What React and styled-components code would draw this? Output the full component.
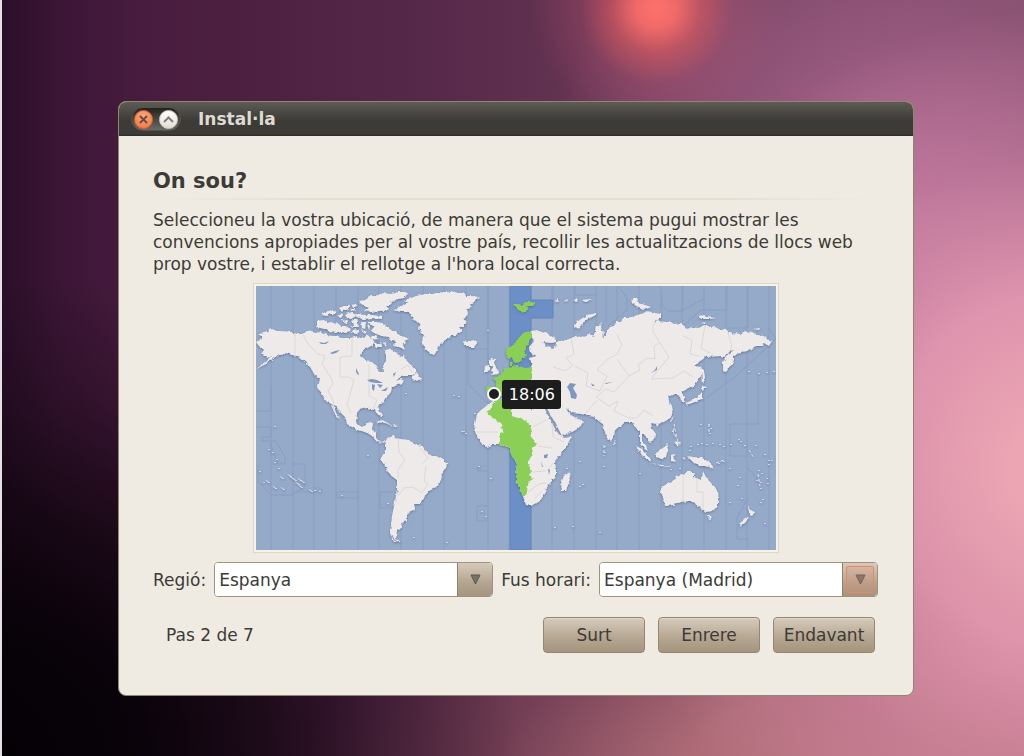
import React from "react";
import styled, { createGlobalStyle, css } from "styled-components";

const GlobalStyle = createGlobalStyle`
  *, *::before, *::after { box-sizing: border-box; }
  body { margin: 0; background: #12060f; }
  body, button, select {
    font-family: "DejaVu Sans", sans-serif;
    font-size: 17px;
    color: #3c3b37;
  }
`;

const Desktop = styled.div`
  min-height: 100vh;
  padding: 101px 110px 60px 116px;
  border-left: 2px solid #e4e0e4;
  background:
    radial-gradient(circle at 64% 8px, #ff716a 0, rgba(246, 108, 105, 0.95) 20px, rgba(222, 92, 98, 0.65) 44px, rgba(190, 85, 110, 0.26) 76px, transparent 125px),
    radial-gradient(ellipse 520px 480px at 0% 100%, #040105 0, rgba(6, 1, 7, 0.96) 25%, rgba(12, 3, 11, 0.75) 50%, rgba(20, 6, 18, 0.35) 75%, transparent 100%),
    radial-gradient(ellipse 460px 460px at 104% 62%, #f2adb6 0, rgba(232, 156, 180, 0.88) 38%, rgba(206, 132, 164, 0.5) 68%, transparent 100%),
    radial-gradient(ellipse 640px 300px at 92% 104%, rgba(200, 128, 136, 0.95) 0, rgba(186, 116, 124, 0.85) 40%, rgba(140, 82, 92, 0.45) 70%, transparent 100%),
    radial-gradient(ellipse 360px 380px at 88% 28%, rgba(186, 114, 156, 0.9) 0, rgba(168, 100, 142, 0.65) 45%, transparent 100%),
    linear-gradient(90deg, #2b0f29 0, #3c1636 6%, #481c3e 14%, #552748 40%, #6c3a58 65%, #74455f 100%);
`;

const Window = styled.main`
  border: 1px solid #8d8670;
  border-radius: 8px;
  background: #efebe3;
  overflow: hidden;
`;

const TitleBar = styled.header`
  display: flex;
  align-items: center;
  gap: 17px;
  height: 34px;
  padding: 0 12px;
  background: linear-gradient(#5e5c54 0, #4a4943 30%, #3c3b37 55%, #3c3b37 94%, #2c2b28 100%);
`;

const WindowControls = styled.div`
  display: flex;
  align-items: center;
  gap: 6px;
  height: 24px;
  padding: 0 2px;
  border: 1px solid #55534c;
  border-radius: 12px;
  background: linear-gradient(#23221f, #6b6a64);
`;

const ControlButton = styled.button`
  display: grid;
  place-items: center;
  width: 19px;
  height: 19px;
  padding: 0;
  border: 1px solid ${(p) => (p.$close ? "#d9662f" : "#d2cec4")};
  border-radius: 50%;
  background: ${(p) =>
    p.$close
      ? "radial-gradient(circle at 50% 30%, #fba783, #f2703a)"
      : "linear-gradient(#ffffff, #e2ded4)"};
`;

const WindowTitle = styled.span`
  font-weight: bold;
  line-height: 22px;
  color: #dfdbd2;
`;

const Content = styled.div`
  display: flex;
  flex-direction: column;
  padding: 31px 35px 42px 34px;
`;

const Heading = styled.h1`
  margin: 0;
  font-size: 21px;
  line-height: 28px;
`;

const Divider = styled.hr`
  width: 100%;
  height: 2px;
  margin: 3px 0 9px;
  border: 0;
  background: linear-gradient(90deg, transparent, #e6e0d1 20%, #e6e0d1 80%, transparent);
`;

const Description = styled.p`
  margin: 0;
  max-width: 704px;
  line-height: 22px;
`;

const MapFrame = styled.figure`
  position: relative;
  align-self: center;
  width: 100%;
  max-width: 526px;
  margin: 8px 0 9px;
  padding: 2px;
  border: 1px solid #e0d8c6;
  background: #f6f2e6;
`;

const MapDrawing = styled.svg`
  display: block;
  width: 100%;
  height: auto;
  background: #95a9c9;
`;

const TimeTip = styled.output`
  position: absolute;
  left: 47.5%;
  top: 36%;
  width: 59px;
  border-radius: 3px;
  background: #1d1d1d;
  color: #fff;
  font-size: 16px;
  line-height: 29px;
  text-align: center;
`;

const FieldRow = styled.div`
  display: grid;
  grid-template-columns: auto 1fr auto 1fr;
  align-items: center;
  column-gap: 8px;
`;

const FieldLabel = styled.label`
  line-height: 22px;
`;

const tan = css`
  background: linear-gradient(#d5cabb 0, #c2b5a2 35%, #b3a58f 60%, #a5957f 100%);
`;

const Combo = styled.div`
  position: relative;
  height: 35px;
  border: 1px solid #a0927c;
  border-radius: 4px;
  overflow: hidden;
`;

const ComboSelect = styled.select`
  appearance: none;
  width: 100%;
  height: 33px;
  padding: 0 40px 0 4px;
  border: 0;
  outline: 0;
  background: #fff;
`;

const ComboArrow = styled.span`
  position: absolute;
  top: 0;
  right: 0;
  display: grid;
  place-items: center;
  width: 35px;
  height: 33px;
  border-left: 1px solid #8d806c;
  ${tan}
  pointer-events: none;
  ${(p) =>
    p.$focused &&
    css`
      &::after {
        content: "";
        position: absolute;
        inset: 3px;
        border: 1px solid #ec8468;
        border-radius: 2px;
        background: rgba(236, 132, 104, 0.2);
      }
    `}
`;

const Footer = styled.footer`
  display: flex;
  align-items: center;
  gap: 13px;
  margin-top: 20px;
  padding: 0 3px 0 13px;
`;

const Step = styled.span`
  flex: 1;
  line-height: 22px;
`;

const ActionButton = styled.button`
  width: 102px;
  height: 36px;
  padding: 0;
  border: 1px solid #95876f;
  border-radius: 4px;
  ${tan}
  box-shadow: inset 0 1px 0 #e0d7ca;
`;

const LAND = [
  // North America
  "M1 57L7 54 6 52 3 50 9 47 13 46 17 44 22 46 26 46 37 47 42 49 47 49 53 46 57 47 62 48 65 47 69 49 77 51 81 51 86 53 96 53 102 51 105 53 109 53 112 50 114 51 116 54 120 57 118 60 114 62 111 64 107 67 106 72 111 76 117 77 122 81 124 86 126 87 129 87 128 81 131 76 131 71 129 66 133 64 137 65 142 68 145 72 149 70 152 76 157 81 162 85 161 88 156 91 149 91 144 93 141 96 146 94 149 96 144 100 137 102 136 107 132 112 129 117 123 121 125 126 127 131 125 132 121 127 120 124 116 125 112 123 104 125 102 129 101 137 106 142 111 141 114 137 118 138 117 145 121 147 121 153 125 157 130 156 129 158 122 157 117 151 111 147 102 145 92 139 90 132 85 127 81 121 77 119 72 117 66 109 63 102 65 94 59 89 57 85 54 82 51 77 47 74 41 71 31 68 28 70 24 69 19 73 11 79 1 84 11 77 17 71 13 73 9 71 6 68 9 64 4 61Z",
  "M76 119L79 122 81 128 86 135 82 132 78 125Z",
  // Canadian Arctic
  "M62 36L69 35 73 38 77 37 80 40 81 37 86 41 90 41 96 44 95 47 92 48 87 47 82 48 74 47 72 44 69 44 62 42Z",
  "M66 30L70 27 74 27 78 25 82 26 79 30 75 29 72 31Z",
  "M84 23L88 21 94 21 92 26 89 24 87 27Z",
  "M91 29L97 27 99 29 109 30 116 30 127 31 127 35 117 34 109 35 101 31 96 34 92 33Z",
  "M104 16L110 15 116 11 121 11 127 8 135 9 144 7 150 7 154 9 149 13 143 14 137 17 132 22 134 24 129 27 123 26 117 28 109 25 114 23 111 21 106 19Z",
  "M96 36L102 34 103 38 104 42 97 42 99 39Z",
  "M106 37L111 37 110 44 107 43Z M98 45L104 44 102 49 97 48Z M84 29L89 30 87 33 82 32Z M107 45L112 47 110 50Z",
  "M113 37L121 37 127 38 131 42 134 42 137 46 141 46 143 49 146 51 150 52 154 54 149 56 151 58 148 60 150 65 144 62 138 61 142 57 136 56 134 52 127 51 121 49 116 46 119 42Z",
  "M119 59L126 57 127 62 121 62Z M157 91L162 88 167 95 164 96 157 94Z",
  "M97 20L101 19 102 22 98 23Z M95 24L100 24 99 26Z M112 39L115 41 114 45Z M86 35L93 36 91 39Z M115 52L121 51 124 54 118 55Z M128 57L132 58 131 62Z",
  // Greenland and Iceland
  "M139 25L146 21 154 18 149 16 156 13 161 11 171 9 178 9 184 7 190 8 197 6 203 8 209 8 212 11 216 11 225 12 221 14 219 17 214 19 217 22 211 24 214 27 212 30 211 33 207 34 212 37 209 39 209 42 204 42 207 46 203 49 197 51 191 55 186 59 184 62 182 66 179 70 174 68 171 65 169 61 167 54 169 50 166 47 164 44 165 40 161 36 156 31 154 27 146 27Z",
  "M208 56L212 57 215 56 219 55 223 57 219 62 213 62 211 60 209 60Z",
  // British Isles
  "M236 73L240 74 239 78 241 82 245 86 243 89 236 90 239 87 236 86 238 82 235 81 234 77Z",
  "M230 81L234 80 234 86 229 88Z",
  // South America
  "M130 156L132 153 139 151 140 153 146 154 154 155 159 159 167 161 170 166 177 171 181 171 187 174 192 179 191 183 187 189 186 196 182 202 174 206 170 211 166 219 159 219 160 224 154 227 152 230 152 236 146 238 147 242 143 246 142 251 141 254 147 257 139 257 135 249 136 242 137 231 140 217 142 204 142 195 134 189 129 179 126 176 127 171 131 166 131 159Z",
  // Africa and Madagascar
  "M239 116L230 122 226 125 222 129 221 134 219 144 222 151 227 159 232 162 237 160 244 160 251 161 255 163 257 172 262 179 261 189 261 196 265 204 268 211 271 220 277 221 285 216 291 207 293 200 301 192 301 184 300 177 306 169 312 161 317 152 309 153 306 151 301 146 296 136 291 127 289 122 284 118 254 114 244 115Z",
  "M314 187L316 191 311 206 307 206 306 199 308 193Z",
  // Eurasia
  "M276 46L282 45 286 48 291 47 296 51 301 54 301 57 297 58 287 57 293 62 297 64 301 61 303 56 306 56 314 54 321 51 326 52 334 49 339 51 341 41 344 41 347 38 346 43 349 47 348 54 351 49 354 42 359 41 361 37 367 37 369 33 374 33 381 30 387 29 392 26 400 28 406 29 406 33 397 38 404 36 411 37 416 37 419 39 427 38 431 44 437 42 444 43 449 40 453 41 459 42 463 44 472 45 474 48 487 49 488 46 497 47 503 50 509 51 512 54 517 56 514 61 509 58 508 61 501 61 497 65 487 67 479 71 479 75 477 79 471 87 468 86 468 77 472 71 479 66 474 67 470 72 466 71 451 72 444 77 439 81 446 82 448 86 446 91 439 101 432 104 427 107 429 112 430 117 426 117 425 111 420 109 416 111 413 110 417 107 413 111 414 116 417 121 418 127 416 132 414 134 407 138 402 139 396 138 397 144 401 149 400 154 395 157 391 152 387 149 387 156 391 160 393 167 389 163 385 157 385 147 381 144 377 137 370 137 366 141 360 146 359 152 356 157 352 153 349 144 348 139 345 137 339 132 327 129 317 128 313 124 316 130 321 133 329 137 326 142 317 147 307 151 304 145 299 136 294 127 291 122 284 112 268 104 277 94 277 82 276 77 275 73 282 71 276 68 275 62 279 57 277 52Z",
  "M319 42L322 37 326 34 333 30 341 28 341 30 331 35 327 40 324 44Z",
  "M376 16L379 14 382 14 384 18 387 19 396 22 389 25 384 22 381 21Z",
  "M441 31L451 30 452 32 461 33 455 34 447 34Z M499 44L505 43 504 45Z M446 38L451 37 450 39Z",
  "M299 16L304 14 304 17Z M309 16L313 14 312 17Z M317 16L323 13 322 17Z M326 15L337 14 331 17Z",
  // Japan, Sakhalin
  "M447 82L449 86 450 93 448 99Z M447 101L452 102 447 106Z M447 107L447 115 437 118 434 119 432 121 431 118 442 113Z",
  // South-east Asia
  "M417 132L418 135 416 137Z M401 139L404 139 402 142Z M359 156L361 159 359 160Z",
  "M417 142L420 145 419 149 422 153 419 151Z M420 156L425 157 424 161Z",
  "M381 161L387 164 396 174 395 177 387 171Z M396 178L407 180 417 182 406 181Z",
  "M401 167L408 163 412 159 414 164 412 168 411 172 406 175 401 172Z",
  "M416 170L421 169 418 172 421 177 416 176Z M432 171L439 172 447 173 454 177 460 184 451 181 444 181 440 179 437 176Z",
  // Australia, Tasmania, New Zealand
  "M407 202L412 199 417 197 420 193 424 191 427 189 429 190 431 187 434 187 440 187 439 192 445 195 447 191 448 186 451 192 455 197 460 202 462 206 464 214 462 220 459 226 451 227 446 224 445 221 443 222 441 218 434 216 426 217 419 220 411 221 409 217 408 212 406 208Z",
  "M452 231L457 231 455 236Z M493 221L497 226 500 227 497 231 495 230 495 226Z M494 231L491 237 486 241 484 239 490 234Z",
  // Caribbean
  "M121 137L127 135 133 138 136 140 130 138Z M138 140L144 141 140 142Z",
];

const GREEN = [
  "M241 115L257 114 257 131 266 134 271 136 277 141 276 149 277 154 282 160 277 163 278 168 276 172 273 177 274 182 277 186 274 190 276 192 279 195 274 196 273 201 272 206 271 211 268 211 265 204 261 196 261 189 262 179 257 172 255 163 251 161 245 160 245 149 249 147 245 143 248 141 231 127 234 126Z",
  "M237 92L243 92 246 91 246 88 249 86 249 84 254 83 264 81 270 83 277 82 277 94 268 104 257 112 241 112 232 110 231 102 241 102 241 96Z",
  "M276 46L277 53 272 61 270 67 272 71 267 74 264 78 260 79 258 75 257 72 254 74 251 71 251 65 257 61 262 55 267 49 271 47Z",
  "M255 77L258 77 257 81 255 81Z M260 80L263 80 261 82Z",
  "M258 19L264 19 267 21 271 17 281 17 278 21 272 21 274 24 268 28 262 24Z",
];

const WATER = [
  "M63 56L68 57 73 55 70 58 65 58Z M74 67L79 65 84 64 80 67 76 68Z M100 82L103 88 102 89 100 86Z",
  "M111 94L116 93 121 94 127 97 120 97 114 96Z M116 98L119 99 118 105 116 103Z M121 98L127 99 124 102Z M125 105L132 101 130 105Z",
  "M117 54L121 53 125 58 121 58Z M137 88L140 86 138 91Z",
  "M314 97L320 98 317 102 321 109 320 113 315 112 314 106 311 101Z",
  "M395 87L399 84 401 80 401 84Z M349 97L357 96 350 98Z M335 97L339 100 336 100Z",
  "M288 169L292 168 291 172 288 172Z M285 175L287 181 286 181Z M292 183L294 184 293 189Z",
  "M310 122L315 126 312 126Z M275 118L277 122 275 125Z",
];

const BORDERS = [
  "M39 48V71M47 49L52 58 62 68 69 70 66 78 75 92 77 98 72 105 77 114 78 124M96 53V70L84 71V91H92L98 94 93 112 91 119 95 127M113 78V110L121 114 117 123M145 83L152 79 156 86",
  "M142 153L143 166 149 174 142 184 142 192M142 210L148 202 157 201 166 207 172 198 168 195 170 180M164 162L172 172 166 178",
  "M315 52L318 68 310 72 317 79 309 85 297 81M319 80L332 87 330 100 344 105 351 90 341 84 352 73 361 68 366 59 361 49",
  "M361 73L373 90 384 84 382 79 391 72 399 73 398 60 404 57 397 46 397 38M404 57L413 71 404 82 395 93 417 92 428 85 437 91M427 50L436 54 434 68 443 70M449 40L445 62 454 67M472 47L476 60 472 68",
  "M373 90L358 106 350 103 340 111 353 120 362 115 358 125 373 132 381 132 388 124 397 130M341 114L330 127",
  "M427 190V216M441 193V206H447V223M219 146L242 146M277 141L290 134M282 160L296 162M296 137L297 151 308 156M277 186L290 185M297 177L292 184M272 206L283 198 290 197M286 205L279 212",
];

const ZONES = [
  "M0 125H15V101M0 141H15V151H6V155H20L29 171V178H22L14 156M2 178V195L15 209H36L49 200V178H37M37 206H66V202H58M81 206H102V212H81ZM124 206H142V222H124Z",
  "M232 0V63H212V98L232 118M232 180H222V185H232M232 220H221V235H232M232 76V64M319 0V9H341M297 0V14",
  "M350 0V36M362 0L371 12V24L352 40M406 8V20L412 25H426L449 12M427 0V25M471 0V24H445L427 40M492 0V42H470M513 42L520 53 480 90 450 112M502 92V138H474V170H492M492 182L503 195M492 212L481 232V253H492",
];

const ISLETS = [
  [18,140],[12,163],[16,166],[18,176],[20,173],[22,182],[3,185],[7,196],[12,196],[19,202],[26,192],[34,190],[27,203],
  [36,192],[39,194],[44,194],[42,198],[45,201],[47,196],[55,205],[58,204],[63,205],[85,209],[111,169],[131,217],[149,107],[157,251],
  [197,109],[202,110],[218,127],[223,126],[207,145],[209,147],[205,145],[222,180],[234,192],[225,225],[229,230],[190,256],[298,241],[316,240],
  [310,182],[323,175],[326,198],[323,200],[348,160],[348,166],[347,180],[383,187],[343,246],
  [444,138],[452,138],[454,142],[453,147],[434,160],[433,164],[441,158],[445,157],[450,158],[456,157],[463,158],[467,160],[474,158],
  [482,153],[484,155],[488,159],[499,159],[508,168],[512,174],[515,174],[512,178],[502,184],[505,187],[500,194],[504,196],[510,192],[511,197],[504,202],[506,213],[504,216],
  [483,191],[481,199],[485,212],[508,237],[473,216],[492,85],[502,87],[510,86],[517,85],[462,177],[467,175],[473,182],[414,183],[423,182],[427,172],[231,44],
];

function WorldMap() {
  const meridians = Array.from({ length: 24 }, (_, i) => Math.round(15 + i * 21.65));
  return (
    <MapDrawing viewBox="0 0 520 264" role="img" aria-label="Mapa de fusos horaris">
      <defs>
        <filter id="shade" x="-5%" y="-5%" width="110%" height="110%">
          <feDropShadow dx="0" dy="1" stdDeviation="1" floodColor="#41587d" floodOpacity="0.6" />
        </filter>
        {/* Roughens the coastlines a little before the shadow is added. */}
        <filter id="coast" x="-5%" y="-5%" width="110%" height="110%">
          <feTurbulence type="fractalNoise" baseFrequency="0.25" numOctaves="2" seed="4" result="noise" />
          <feDisplacementMap
            in="SourceGraphic"
            in2="noise"
            scale="5"
            xChannelSelector="R"
            yChannelSelector="G"
            colorInterpolationFilters="sRGB"
          />
          <feDropShadow dx="0" dy="1" stdDeviation="1" floodColor="#41587d" floodOpacity="0.6" />
        </filter>
      </defs>
      <g fill="none" stroke="#899dc1" strokeWidth="1">
        {meridians.map((x) => (
          <path key={x} d={`M${x} 0V264`} />
        ))}
        <path d={ZONES.join("")} />
      </g>
      <path d="M254 0H275V14H297V32H275V264H254Z" fill="#6c8fc7" stroke="#6484b8" strokeWidth="1" />
      <g filter="url(#shade)">
        <path
          d="M121 137L127 135 136 140M453 138V148M493 164L498 172M502 188L504 200M348 159V170M460 177L468 174M418 138L422 156M427 171L429 175"
          fill="none"
          stroke="#e4e4e8"
          strokeDasharray="3 2"
        />
        {ISLETS.map(([x, y]) => (
          <rect key={`${x}-${y}`} x={x} y={y} width="2" height="1" fill="#cdd6e4" />
        ))}
        {ISLETS.slice(8, 20).map(([x, y]) => (
          <path key={`${x}-${y}`} d={`M${x - 3} ${y - 2}l3 1 1 2z`} fill="#dde2ea" />
        ))}
      </g>
      <g filter="url(#coast)">
        <path d={LAND.join("")} fill="#eeeaea" />
        <path d={GREEN.join("")} fill="#8bcf56" />
      </g>
      <path d={BORDERS.join("")} fill="none" stroke="#dcd8d8" strokeWidth="1" />
      <path d={WATER.join("")} fill="#7f98bf" />
      <path d="M136 249L138 254 142 256 146 257" fill="none" stroke="#8c95a4" strokeWidth="1" />
      <circle cx="238" cy="108" r="6" fill="#1d1d1d" stroke="#fff" strokeWidth="2" />
    </MapDrawing>
  );
}

function ComboBox({ id, options, focused }) {
  return (
    <Combo>
      <ComboSelect id={id} defaultValue={options[0]}>
        {options.map((o) => (
          <option key={o}>{o}</option>
        ))}
      </ComboSelect>
      <ComboArrow $focused={focused}>
        <svg width="11" height="11" viewBox="0 0 11 11" aria-hidden="true">
          <path d="M1 1H10L5.5 10Z" fill="#77746b" stroke="#59574f" strokeWidth="1" />
        </svg>
      </ComboArrow>
    </Combo>
  );
}

export default function App() {
  return (
    <>
      <GlobalStyle />
      <Desktop>
        <Window>
          <TitleBar>
            <WindowControls>
              <ControlButton $close type="button" aria-label="Tanca">
                <svg width="9" height="9" viewBox="0 0 9 9" aria-hidden="true">
                  <path d="M1 1L8 8M8 1L1 8" stroke="#67503f" strokeWidth="2" />
                </svg>
              </ControlButton>
              <ControlButton type="button" aria-label="Maximitza">
                <svg width="11" height="7" viewBox="0 0 11 7" aria-hidden="true">
                  <path d="M1 6L5.5 1.5 10 6" fill="none" stroke="#83817a" strokeWidth="2" />
                </svg>
              </ControlButton>
            </WindowControls>
            <WindowTitle>Instal·la</WindowTitle>
          </TitleBar>
          <Content>
            <Heading>On sou?</Heading>
            <Divider />
            <Description>
              Seleccioneu la vostra ubicació, de manera que el sistema pugui mostrar les
              convencions apropiades per al vostre país, recollir les actualitzacions de llocs web
              prop vostre, i establir el rellotge a l'hora local correcta.
            </Description>
            <MapFrame>
              <WorldMap />
              <TimeTip>18:06</TimeTip>
            </MapFrame>
            <FieldRow>
              <FieldLabel htmlFor="region">Regió:</FieldLabel>
              <ComboBox id="region" options={["Espanya"]} />
              <FieldLabel htmlFor="zone">Fus horari:</FieldLabel>
              <ComboBox id="zone" options={["Espanya (Madrid)"]} focused />
            </FieldRow>
            <Footer>
              <Step>Pas 2 de 7</Step>
              <ActionButton type="button">Surt</ActionButton>
              <ActionButton type="button">Enrere</ActionButton>
              <ActionButton type="button">Endavant</ActionButton>
            </Footer>
          </Content>
        </Window>
      </Desktop>
    </>
  );
}
